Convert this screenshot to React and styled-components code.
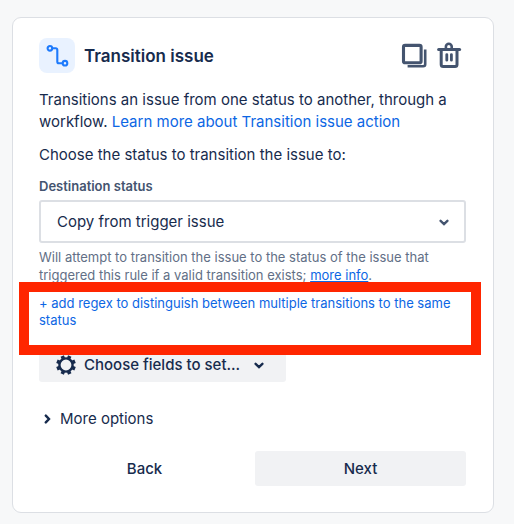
import React from 'react';
import styled, { createGlobalStyle } from 'styled-components';

const App = () => {
  const [status, setStatus] = React.useState('copy');

  return (
    <Page>
      <GlobalStyle />
      <Card>
        <Header>
          <IconTile><TransitionIcon /></IconTile>
          <Title>Transition issue</Title>
          <IconButton type="button" aria-label="Duplicate"><CopyIcon /></IconButton>
          <IconButton type="button" aria-label="Delete"><TrashIcon /></IconButton>
        </Header>

        <Text>
          Transitions an issue from one status to another, through a workflow.{' '}
          <Link href="#learn-more">Learn more about Transition issue action</Link>
        </Text>
        <Text>Choose the status to transition the issue to:</Text>

        <Label htmlFor="destination">Destination status</Label>
        <SelectWrapper>
          <Select
            id="destination"
            value={status}
            onChange={(event) => setStatus(event.target.value)}
          >
            <option value="copy">Copy from trigger issue</option>
          </Select>
          <Chevron />
        </SelectWrapper>
        <Help>
          Will attempt to transition the issue to the status of the issue that
          triggered this rule if a valid transition exists;{' '}
          <Link href="#more-info" $underline>more info</Link>.
        </Help>

        <Regex>
          <RegexButton type="button">
            + add regex to distinguish between multiple transitions to the same status
          </RegexButton>
          <Highlight />
        </Regex>

        <FieldsButton type="button">
          <GearIcon />
          Choose fields to set...
          <Chevron />
        </FieldsButton>

        <MoreButton type="button">
          <Chevron $right />
          More options
        </MoreButton>

        <Footer>
          <Button type="button">Back</Button>
          <Button type="button" $filled>Next</Button>
        </Footer>
      </Card>
    </Page>
  );
};

export default App;

const TransitionIcon = () => (
  <svg width="24" height="24" viewBox="0 0 24 24" fill="none" stroke="#1d7afc" strokeWidth="2.1">
    <circle cx="4.9" cy="4.3" r="2.3" />
    <circle cx="20" cy="19.2" r="2.3" />
    <path d="M7.2 4.3h3.6A1.5 1.5 0 0 1 12.3 5.8v11.9a1.5 1.5 0 0 0 1.5 1.5h4" />
  </svg>
);

const CopyIcon = () => (
  <svg width="26" height="28" viewBox="0 0 26 28" fill="none" stroke="#44546f">
    <rect x="2.5" y="3.4" width="17.6" height="17.4" rx="1.6" strokeWidth="3.1" />
    <path d="M24.2 7.6v14.6a2 2 0 0 1-2 2H6.6" strokeWidth="2.6" />
  </svg>
);

const TrashIcon = () => (
  <svg width="26" height="28" viewBox="0 0 26 28" fill="none" stroke="#44546f">
    <path d="M2.6 7.4h21" strokeWidth="3" strokeLinecap="round" />
    <path d="M9.9 6.5V4.6a2.9 2.9 0 0 1 5.8 0v1.9" strokeWidth="2.6" />
    <path d="M5.2 8v14.6a2 2 0 0 0 2 2h11.8a2 2 0 0 0 2-2V8" strokeWidth="3" />
    <path d="M10.8 12.6v5.6M15.4 12.6v5.6" strokeWidth="2.8" strokeLinecap="round" />
  </svg>
);

const GearIcon = () => (
  <svg width="20" height="20" viewBox="0 0 20 20" fill="none" stroke="#172b4d">
    <circle cx="10" cy="10" r="6.6" strokeWidth="2.4" />
    {[0, 45, 90, 135, 180, 225, 270, 315].map((angle) => (
      <path
        key={angle}
        d="M10 0.2V3.4"
        strokeWidth="3.6"
        transform={`rotate(${angle + 22.5} 10 10)`}
      />
    ))}
  </svg>
);

const ChevronSvg = ({ className }) => (
  <svg className={className} width="10" height="10" viewBox="0 0 10 10" fill="none" stroke="currentColor" strokeWidth="2.4" strokeLinecap="round">
    <path d="M1.6 3.8 5 7l3.4-3.2" />
  </svg>
);

const GlobalStyle = createGlobalStyle`
  * {
    box-sizing: border-box;
  }
  body {
    margin: 0;
    background: #f7f8f9;
    color: #172b4d;
    font-family: Inter, "Liberation Sans", sans-serif;
    font-size: 15px;
  }
  button, select {
    margin: 0;
    padding: 0;
    border: none;
    background: transparent;
    color: inherit;
    font: inherit;
    cursor: pointer;
  }
`;

const Page = styled.main`
  padding: 17px 20px 12px 12px;
`;

const Card = styled.section`
  display: flex;
  flex-direction: column;
  padding: 20px 27px 26px 26px;
  background: #fff;
  border: solid 1px #dcdfe4;
  border-radius: 9px;
`;

const Header = styled.header`
  display: flex;
  align-items: center;
  gap: 9px;
  margin-bottom: 16px;
  padding-right: 4px;
`;

const IconTile = styled.div`
  display: flex;
  align-items: center;
  justify-content: center;
  width: 36px;
  height: 35px;
  background: #e9f2ff;
  border-radius: 8px;
`;

const Title = styled.h2`
  flex: 1;
  margin: 0;
  font-size: 17px;
  font-weight: 600;
  line-height: 20px;
`;

const IconButton = styled.button`
  display: flex;
`;

const Text = styled.p`
  margin: 0 0 11px;
  line-height: 22px;
`;

const Link = styled.a`
  color: #0c66e4;
  text-decoration: ${({ $underline }) => ($underline ? 'underline' : 'none')};
`;

const Label = styled.label`
  margin: 1px 0 5px;
  color: #44546f;
  font-size: 13px;
  font-weight: 600;
  line-height: 17px;
`;

const Chevron = styled(ChevronSvg)`
  flex: none;
  transform: ${({ $right }) => ($right ? 'rotate(-90deg)' : 'none')};
`;

const SelectWrapper = styled.div`
  display: grid;
  align-items: center;
  color: #44546f;
  > * {
    grid-area: 1 / 1;
  }
  svg {
    justify-self: end;
    margin-right: 17px;
    pointer-events: none;
  }
`;

const Select = styled.select`
  width: 100%;
  height: 43px;
  padding: 0 40px 0 16px;
  appearance: none;
  background: #fff;
  border: solid 2px #dcdfe4;
  border-radius: 3px;
  color: #172b4d;
`;

const Help = styled.p`
  margin: 5px 0 11px;
  color: #626f86;
  font-size: 13px;
  line-height: 18px;
`;

const Regex = styled.div`
  position: relative;
  margin-bottom: 18px;
`;

const RegexButton = styled.button`
  display: block;
  color: #0c66e4;
  font-size: 13px;
  line-height: 17px;
  text-align: left;
`;

const Highlight = styled.div`
  position: absolute;
  inset: -13px -15px -26px -20px;
  border: solid 10px #ff2600;
  pointer-events: none;
`;

const FieldsButton = styled.button`
  display: flex;
  align-items: center;
  align-self: flex-start;
  gap: 8px;
  height: 35px;
  padding: 0 22px 0 17px;
  background: #f1f2f4;
  border-radius: 3px;
  font-weight: 500;
  svg:last-child {
    margin-left: 6px;
  }
`;

const MoreButton = styled.button`
  display: flex;
  align-items: center;
  align-self: flex-start;
  gap: 8px;
  margin: 26px 0 21px;
  padding-left: 3px;
  line-height: 22px;
`;

const Footer = styled.footer`
  display: grid;
  grid-template-columns: 1fr 1fr;
  gap: 5px;
`;

const Button = styled.button`
  height: 35px;
  background: ${({ $filled }) => ($filled ? '#f1f2f4' : 'transparent')};
  border-radius: 3px;
  font-weight: 500;
`;
